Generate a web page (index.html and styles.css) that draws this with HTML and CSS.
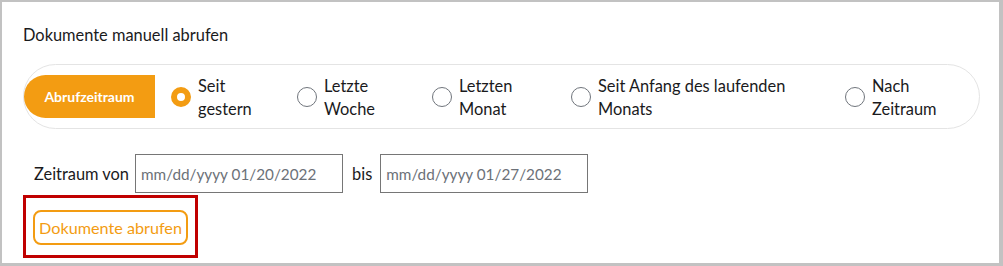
FILE: index.html
```html
<!DOCTYPE html>
<html lang="de">
<head>
<meta charset="utf-8">
<title>Dokumente manuell abrufen</title>
<link rel="stylesheet" href="styles.css">
</head>
<body>
<div class="frame">
  <h2 class="title">Dokumente manuell abrufen</h2>
  <div class="pill">
    <div class="tag">Abrufzeitraum</div>
    <label class="opt o1"><span class="radio checked"></span><span class="txt">Seit<br>gestern</span></label>
    <label class="opt o2"><span class="radio"></span><span class="txt">Letzte<br>Woche</span></label>
    <label class="opt o3"><span class="radio"></span><span class="txt">Letzten<br>Monat</span></label>
    <label class="opt o4"><span class="radio"></span><span class="txt">Seit Anfang des laufenden<br>Monats</span></label>
    <label class="opt o5"><span class="radio"></span><span class="txt">Nach<br>Zeitraum</span></label>
  </div>
  <div class="range">
    <span class="lbl">Zeitraum von</span>
    <input class="inp" type="text" value="mm/dd/yyyy 01/20/2022" readonly>
    <span class="lbl bis">bis</span>
    <input class="inp" type="text" value="mm/dd/yyyy 01/27/2022" readonly>
  </div>
  <div class="hl">
    <button class="btn" type="button">Dokumente abrufen</button>
  </div>
</div>
</body>
</html>
```
FILE: styles.css
```css
* { box-sizing: border-box; }
html, body { margin: 0; padding: 0; background: #fff; }
body {
  font-family: Lato, "Noto Sans", sans-serif;
  color: #1a1a1c;
}
.frame {
  width: 1003px;
  height: 266px;
  border-style: solid;
  border-color: #c2c2c2;
  border-width: 2px 4px 3px 2px;
  padding: 0 0 0 21px;
  overflow: hidden;
}
.title {
  margin: 21px 0 0 0;
  font-size: 16.4px;
  font-weight: 400;
  line-height: 24px;
}
.pill {
  margin-top: 17px;
  width: 957px;
  height: 65px;
  border: 1px solid #e4e4e4;
  border-radius: 33px;
  display: flex;
  align-items: center;
}
.tag {
  width: 131px;
  height: 43px;
  background: #f39c12;
  color: #fff;
  font-size: 14px;
  font-weight: 700;
  border-radius: 22px 0 0 22px;
  display: flex;
  align-items: center;
  justify-content: center;
  margin-right: 16px;
}
.opt {
  display: flex;
  align-items: center;
  gap: 7px;
  font-size: 16.4px;
  line-height: 23px;
}
.o1 { width: 126px; }
.o2 { width: 135px; }
.o3 { width: 139px; }
.o4 { width: 274px; }
.radio {
  flex: none;
  width: 20px;
  height: 20px;
  border-radius: 50%;
  border: 1.5px solid #70757c;
  background: #fff;
}
.radio.checked {
  border: 6.5px solid #f39c12;
}
.txt { display: block; padding-top: 1px; }
.range {
  margin-top: 25px;
  display: flex;
  align-items: center;
  padding-left: 11px;
  height: 39px;
}
.lbl { font-size: 16.4px; margin-right: 6px; }
.bis { margin-left: 9px; margin-right: 8px; }
.inp {
  width: 208px;
  height: 39px;
  border: 1px solid #767676;
  border-radius: 0;
  padding: 0 0 0 5px;
  font-family: Lato, "Noto Sans", sans-serif;
  font-size: 15.3px;
  color: #6c7178;
  background: #fff;
  outline: none;
}
.hl {
  margin-top: 2px;
  width: 175px;
  height: 63px;
  border: 3px solid #c00000;
  padding: 12px 0 0 7px;
}
.btn {
  width: 155px;
  height: 35px;
  border: 2px solid #f39c12;
  border-radius: 8px;
  background: #fff;
  color: #f39c12;
  font-family: Lato, "Noto Sans", sans-serif;
  font-size: 16.2px;
  padding: 0;
}
```
